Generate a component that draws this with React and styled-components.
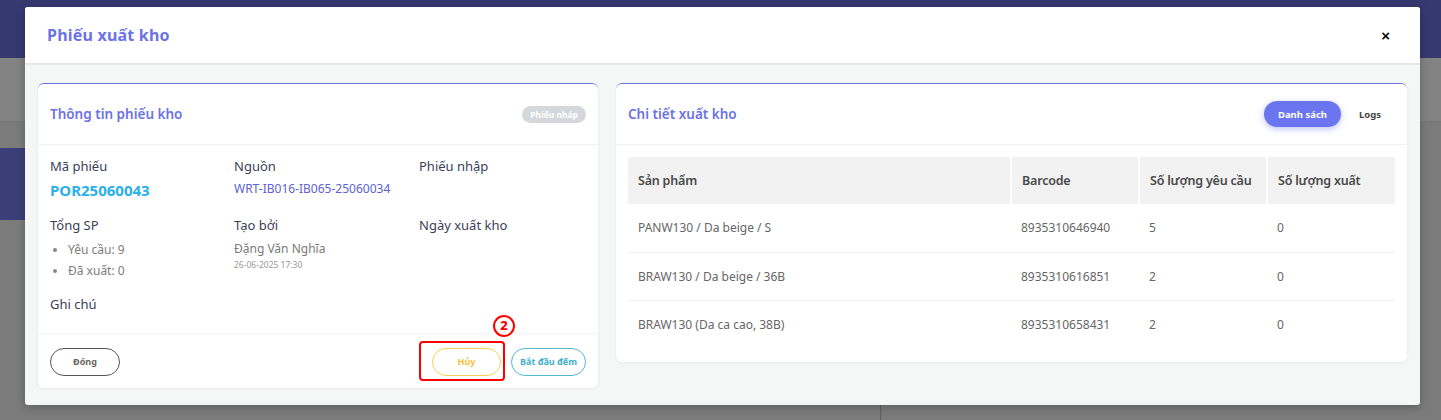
import styled, { createGlobalStyle } from 'styled-components';

const GlobalStyle = createGlobalStyle`
  html, body { margin: 0; padding: 0; }
  body {
    font-family: "Noto Sans", "Open Sans", sans-serif;
    background: #7b7b7b;
    overflow: hidden;
  }
  * { box-sizing: border-box; }
`;

/* dimmed page behind the modal */
const Page = styled.div`
  position: relative;
  width: 1441px;
  height: 420px;
  background: #7b7b7b;
  display: flex;
  flex-direction: column;
`;

const TopBar = styled.div`
  height: 58px;
  background: #353970;
`;

const SubBar = styled.div`
  height: 64px;
  background: #838383;
  border-bottom: 1px solid #777;
`;

const PageBody = styled.div`
  flex: 1;
  display: flex;
  justify-content: space-between;
  padding-top: 26px;
`;

const SideBlock = styled.div`
  width: 40px;
  height: 72px;
  background: #3b3e78;
`;

const RightPane = styled.div`
  width: 561px;
  align-self: flex-end;
  height: 20px;
  border-left: 1px solid #5e5e5e;
`;

const Overlay = styled.div`
  position: absolute;
  inset: 0;
`;

const Modal = styled.div`
  position: absolute;
  top: 7px;
  left: 25px;
  width: 1395px;
  height: 398px;
  background: #f5f7f7;
  border-radius: 3px;
  box-shadow: 0 2px 10px rgba(0, 0, 0, 0.25);
  display: flex;
  flex-direction: column;
  overflow: hidden;
`;

const ModalHeader = styled.div`
  height: 58px;
  flex-shrink: 0;
  background: #fff;
  border-bottom: 2px solid #e6e8e8;
  display: flex;
  align-items: center;
  justify-content: space-between;
  padding: 0 30px 0 22px;
`;

const ModalTitle = styled.h2`
  margin: 0;
  font-size: 16px;
  font-weight: 700;
  letter-spacing: 0.2px;
  color: #6b72e6;
`;

const CloseButton = styled.button`
  border: none;
  background: none;
  font-size: 15px;
  font-weight: 700;
  color: #111;
  cursor: pointer;
  padding: 0;
  line-height: 1;
`;

const ModalBody = styled.div`
  display: grid;
  grid-template-columns: 560px 1fr;
  gap: 18px;
  align-items: start;
  padding: 18px 13px;
`;

const Card = styled.div`
  background: #fff;
  border-radius: 6px;
  border-top: 1.5px solid #6b72e6;
  box-shadow: 0 1px 3px rgba(0, 0, 0, 0.06);
  display: flex;
  flex-direction: column;
  height: ${p => p.$height}px;
`;

const CardHeader = styled.div`
  height: 61px;
  flex-shrink: 0;
  display: flex;
  align-items: center;
  justify-content: space-between;
  padding: 0 12px;
  border-bottom: 1px solid #f0f1f2;
`;

const CardTitle = styled.h3`
  margin: 0;
  font-size: 13.5px;
  font-weight: 600;
  color: #6b72e6;
`;

const Badge = styled.span`
  background: #d4d7db;
  color: #fff;
  font-size: 8.5px;
  font-weight: 700;
  border-radius: 10px;
  padding: 3px 8px;
`;

const InfoGrid = styled.div`
  flex: 1;
  display: grid;
  grid-template-columns: 184px 185px 1fr;
  grid-auto-rows: min-content;
  row-gap: 14px;
  padding: 12px 12px 0;
`;

const Field = styled.div`
  display: flex;
  flex-direction: column;
  grid-column: ${p => p.$span || 'auto'};
`;

const Label = styled.div`
  font-size: 13px;
  line-height: 18px;
  color: #3b4058;
`;

const Code = styled.div`
  font-size: 15px;
  font-weight: 700;
  line-height: 24px;
  color: #2ab0ea;
  margin-top: 3px;
`;

const Link = styled.a`
  font-size: 12px;
  line-height: 22px;
  color: #5a62d6;
  margin-top: 3px;
  text-decoration: none;
`;

const BulletList = styled.ul`
  margin: 5px 0 0;
  padding-left: 18px;
  color: #7d7d7d;
  font-size: 12px;
  li { line-height: 21px; }
  li::marker { color: #888; }
`;

const Person = styled.div`
  font-size: 12px;
  line-height: 20px;
  color: #7a7a7a;
  margin-top: 5px;
`;

const Stamp = styled.div`
  font-size: 8.5px;
  color: #999;
  line-height: 12px;
`;

const CardFooter = styled.div`
  height: 53px;
  flex-shrink: 0;
  display: flex;
  align-items: center;
  justify-content: space-between;
  padding: 0 12px;
  box-shadow: 0 -2px 5px rgba(0, 0, 0, 0.035);
`;

const FooterActions = styled.div`
  display: flex;
  gap: 10px;
`;

const OutlineButton = styled.button`
  height: 28px;
  width: ${p => p.$width}px;
  border-radius: 14px;
  border: 1.5px solid ${p => p.$color};
  background: #fff;
  color: ${p => p.$text || p.$color};
  font-family: inherit;
  font-size: 9px;
  font-weight: 700;
  cursor: pointer;
  padding: 0;
`;

const Highlight = styled.div`
  position: relative;
  display: flex;
`;

const HighlightBox = styled.span`
  position: absolute;
  left: -13px;
  top: -7px;
  right: -4px;
  bottom: -5px;
  border: 2px solid #f00;
  border-radius: 4px;
  pointer-events: none;
`;

const StepMark = styled.span`
  position: absolute;
  left: 61px;
  top: -33px;
  width: 22px;
  height: 22px;
  border: 2.5px solid #f00;
  border-radius: 50%;
  color: #f00;
  font-size: 13px;
  font-weight: 800;
  display: flex;
  align-items: center;
  justify-content: center;
  line-height: 1;
`;

const Tabs = styled.div`
  display: flex;
  align-items: center;
  gap: 4px;
`;

const TabButton = styled.button`
  height: 26px;
  border: none;
  border-radius: 13px;
  padding: 0 14px;
  font-family: inherit;
  font-size: 9.5px;
  font-weight: 700;
  cursor: pointer;
  background: ${p => (p.$active ? '#6b75ef' : 'transparent')};
  color: ${p => (p.$active ? '#fff' : '#444')};
  box-shadow: ${p => (p.$active ? '0 2px 6px rgba(107,117,239,0.45)' : 'none')};
`;

const TableWrap = styled.div`
  padding: 12px 12px 0;
`;

const Table = styled.table`
  width: 100%;
  border-collapse: collapse;
  font-size: 12px;
`;

const Th = styled.th`
  height: 47px;
  background: #f2f2f2;
  text-align: left;
  padding: 0 10px;
  font-size: 12.5px;
  font-weight: 600;
  letter-spacing: -0.2px;
  white-space: nowrap;
  color: #4a4a4a;
  width: ${p => p.$width || 'auto'};
  & + & { border-left: 2px solid #fff; }
`;

const Td = styled.td`
  height: 48px;
  padding: 0 10px;
  color: #666;
  font-size: 12px;
  tr:not(:last-child) > & { border-bottom: 1px solid #eeeeee; }
`;

const rows = [
  { name: 'PANW130 / Da beige / S', barcode: '8935310646940', req: 5, out: 0 },
  { name: 'BRAW130 / Da beige / 36B', barcode: '8935310616851', req: 2, out: 0 },
  { name: 'BRAW130 (Da ca cao, 38B)', barcode: '8935310658431', req: 2, out: 0 },
];

export default function App() {
  return (
    <>
      <GlobalStyle />
      <Page>
        <TopBar />
        <SubBar />
        <PageBody>
          <SideBlock />
          <RightPane />
        </PageBody>
        <Overlay>
          <Modal>
            <ModalHeader>
              <ModalTitle>Phiếu xuất kho</ModalTitle>
              <CloseButton>×</CloseButton>
            </ModalHeader>
            <ModalBody>
              <Card $height={305}>
                <CardHeader>
                  <CardTitle>Thông tin phiếu kho</CardTitle>
                  <Badge>Phiếu nháp</Badge>
                </CardHeader>
                <InfoGrid>
                  <Field>
                    <Label>Mã phiếu</Label>
                    <Code>POR25060043</Code>
                  </Field>
                  <Field>
                    <Label>Nguồn</Label>
                    <Link>WRT-IB016-IB065-25060034</Link>
                  </Field>
                  <Field>
                    <Label>Phiếu nhập</Label>
                  </Field>
                  <Field>
                    <Label>Tổng SP</Label>
                    <BulletList>
                      <li>Yêu cầu: 9</li>
                      <li>Đã xuất: 0</li>
                    </BulletList>
                  </Field>
                  <Field>
                    <Label>Tạo bởi</Label>
                    <Person>Đặng Văn Nghĩa</Person>
                    <Stamp>26-06-2025 17:30</Stamp>
                  </Field>
                  <Field>
                    <Label>Ngày xuất kho</Label>
                  </Field>
                  <Field $span="1 / -1">
                    <Label>Ghi chú</Label>
                  </Field>
                </InfoGrid>
                <CardFooter>
                  <OutlineButton $width={70} $color="#555" $text="#666">Đóng</OutlineButton>
                  <FooterActions>
                    <Highlight>
                      <HighlightBox />
                      <StepMark>2</StepMark>
                      <OutlineButton $width={69} $color="#f9cf55" $text="#f5c23d">Hủy</OutlineButton>
                    </Highlight>
                    <OutlineButton $width={75} $color="#52b9d2" $text="#3fb0cb">Bắt đầu đếm</OutlineButton>
                  </FooterActions>
                </CardFooter>
              </Card>

              <Card $height={279}>
                <CardHeader>
                  <CardTitle>Chi tiết xuất kho</CardTitle>
                  <Tabs>
                    <TabButton $active>Danh sách</TabButton>
                    <TabButton>Logs</TabButton>
                  </Tabs>
                </CardHeader>
                <TableWrap>
                  <Table>
                    <thead>
                      <tr>
                        <Th>Sản phẩm</Th>
                        <Th $width="128px">Barcode</Th>
                        <Th $width="128px">Số lượng yêu cầu</Th>
                        <Th $width="128px">Số lượng xuất</Th>
                      </tr>
                    </thead>
                    <tbody>
                      {rows.map(r => (
                        <tr key={r.barcode}>
                          <Td>{r.name}</Td>
                          <Td>{r.barcode}</Td>
                          <Td>{r.req}</Td>
                          <Td>{r.out}</Td>
                        </tr>
                      ))}
                    </tbody>
                  </Table>
                </TableWrap>
              </Card>
            </ModalBody>
          </Modal>
        </Overlay>
      </Page>
    </>
  );
}
